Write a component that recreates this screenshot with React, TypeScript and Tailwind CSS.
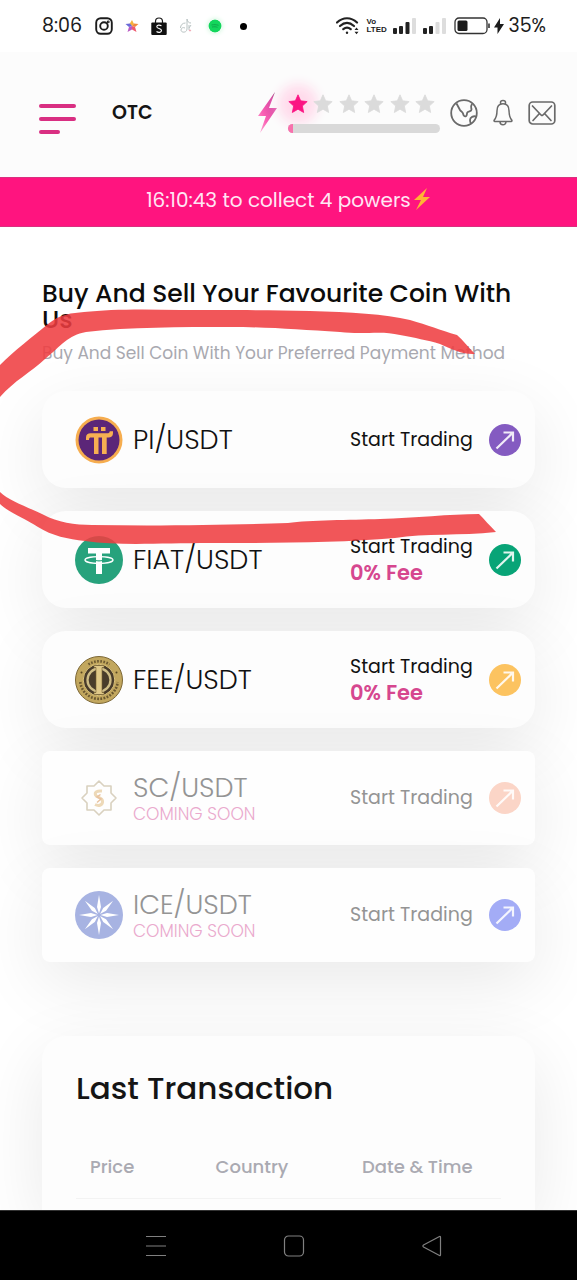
import type { ReactNode } from "react";

function StarShape({ className }: { className: string }) {
  return (
    <svg viewBox="0 0 24 24" className={className} fill="currentColor" stroke="currentColor" strokeWidth="1" strokeLinejoin="round" aria-hidden="true">
      <path d="M12 1l3.200 7.200 7.800.9-5.800 5.300 1.600 7.800L12 18.200l-6.800 4 1.600-7.800L1 9.100l7.800-.9z" />
    </svg>
  );
}

function Signal({ level }: { level: number }) {
  return (
    <svg viewBox="0 0 23 18" className="h-[18px] w-[23px]" aria-hidden="true">
      <rect x="0" y="11" width="4" height="6" rx="1" fill={level > 0 ? "#222" : "#ddd"} />
      <rect x="6" y="9" width="4" height="8" rx="1" fill={level > 1 ? "#222" : "#ddd"} />
      <rect x="12.500" y="5" width="4" height="12" rx="1" fill={level > 2 ? "#222" : "#ddd"} />
      <rect x="19" y="1" width="4" height="16" rx="1" fill="#ddd" />
    </svg>
  );
}

function StatusBar() {
  return (
    <div className="flex h-[52px] items-center justify-between bg-white pr-[31px] pl-[42px] text-[#1c1c1c]">
      <div className="flex items-center">
        <span className="w-[53px] text-[19px]">8:06</span>
        <svg viewBox="0 0 18 18" className="h-[18px] w-[18px]" fill="none" stroke="#1c1c1c" strokeWidth="1.900" aria-hidden="true">
          <rect x="1.200" y="1.200" width="15.600" height="15.600" rx="4.500" />
          <circle cx="9" cy="9" r="3.800" />
          <circle cx="13.200" cy="4.900" r=".5" />
        </svg>
        <svg viewBox="0 0 14 14" className="ml-3 h-[14px] w-[14px]" aria-hidden="true">
          <path d="M7 1L9 5 7 7 4.500 5z" fill="#f6b33c" />
          <path d="M9 4.500L13.500 5 10 8 7 7z" fill="#f08a3c" />
          <path d="M10 8L11.500 13 7 10.500V7z" fill="#ee5a6f" />
          <path d="M7 7v3.500L2.500 13 4 8z" fill="#b95bc4" />
          <path d="M7 7L4 8 .5 5l4.500-.5z" fill="#6a6ad8" />
        </svg>
        <svg viewBox="0 0 16 19" className="ml-3 h-[19px] w-[16px]" aria-hidden="true">
          <path d="M4.500 6V4.500a3.500 3.500 0 017 0V6" fill="none" stroke="#1c1c1c" strokeWidth="1.200" />
          <rect x=".3" y="5.500" width="15.400" height="12.500" rx="1" fill="#111" />
          <path d="M10.500 8.900C8.500 7.500 5.800 8 5.800 9.700c0 2.200 4.700 1.500 4.700 3.900 0 2-3.100 2.400-5 .9" fill="none" stroke="#fff" strokeWidth="1.100" />
        </svg>
        <svg viewBox="0 0 14 16" className="ml-3 h-4 w-[14px]" fill="none" stroke="#b9c3c3" strokeWidth="1" aria-hidden="true">
          <path d="M8 1v10c0 4-6 4-6 1 0-2 2-3 4-2" />
          <path d="M6.500 5c-3 0-5 2-5 5M8 1c.5 3 2 4 4 4M10 7v5M12 7l-2 3" />
          <circle cx="11" cy="12.500" r=".6" stroke="#ee9aa8" />
        </svg>
        <svg viewBox="0 0 14 14" className="ml-[15px] h-[14px] w-[14px] rounded-full shadow-[0_0_5px_#c6f3d5]" aria-hidden="true">
          <circle cx="7" cy="7" r="6.500" fill="#13d65c" />
          <path d="M3.500 6c2.500-.6 4.500-.4 7 .3M4 8c2-.4 4-.3 5.500.3" fill="none" stroke="#0fa84a" strokeWidth="1" />
        </svg>
        <span className="ml-[18px] h-[7px] w-[7px] rounded-full bg-black" />
      </div>
      <div className="flex items-center">
        <svg viewBox="0 0 24 18" className="h-[18px] w-6" fill="none" stroke="#222" strokeWidth="2.200" strokeLinecap="round" aria-hidden="true">
          <path d="M1 5.500C7-.2 15-.2 21 5.500M4 9c4.500-4 9.500-4 14 0M7.300 12.200c2.400-2 5-2 7.400 0" />
          <circle cx="11" cy="15.800" r="1.200" fill="#222" stroke="none" />
          <path d="M18.500 13l2-2.500 2 2.500zM18.500 14.800l2 2.500 2-2.500z" fill="#222" stroke="none" />
        </svg>
        <span className="ml-[6px] flex w-[19px] flex-col font-['Liberation_Sans',sans-serif] text-[8px] leading-[8px] font-bold">
          <span>Vo</span>
          <span>LTED</span>
        </span>
        <span className="ml-2"><Signal level={3} /></span>
        <span className="ml-[7px]"><Signal level={2} /></span>
        <svg viewBox="0 0 36 18" className="ml-2 h-[18px] w-9" fill="none" stroke="#333" strokeWidth="1.300" aria-hidden="true">
          <rect x="1" y="1" width="32" height="15.500" rx="4" />
          <rect x="3.500" y="3.500" width="10" height="10.500" rx="1.500" fill="#1c1c1c" stroke="none" />
          <path d="M35 6.500v4.500" strokeWidth="1.600" />
        </svg>
        <svg viewBox="0 0 10 16" className="ml-1 h-4 w-[10px]" fill="#1c1c1c" aria-hidden="true">
          <path d="M6 0v6h4L3.500 16V9.500H0z" />
        </svg>
        <span className="ml-1 text-[19px]">35%</span>
      </div>
    </div>
  );
}

function Header() {
  return (
    <header className="flex h-[125px] items-start justify-between bg-[#fcfcfc] pt-10 pr-[21px] pl-[39px]">
      <div className="flex items-start">
        <button type="button" aria-label="Open menu" className="mt-3 flex w-[37px] flex-col gap-[9px]">
          <span className="h-1 w-full rounded-full bg-[#d92f82]" />
          <span className="h-1 w-full rounded-full bg-[#d92f82]" />
          <span className="h-1 w-[21px] rounded-full bg-[#d92f82]" />
        </button>
        <h1 className="mt-[9px] ml-9 text-[19px] leading-6 font-semibold text-[#151515]">OTC</h1>
      </div>
      <div className="flex items-start">
        <svg viewBox="0 0 21 42" className="h-[42px] w-[21px]" aria-hidden="true">
          <defs>
            <linearGradient id="bolt" x1="1" y1="0" x2="0" y2="1">
              <stop offset="0" stopColor="#6d2354" />
              <stop offset=".22" stopColor="#d743a0" />
              <stop offset=".65" stopColor="#fb62b5" />
              <stop offset="1" stopColor="#fdb5dc" />
            </linearGradient>
          </defs>
          <path d="M18 0L1 24h8L3 41 20 16h-8z" fill="url(#bolt)" />
        </svg>
        <div className="ml-[10px] flex w-[152px] flex-col pt-[2px]">
          <div className="flex justify-between pr-[5px]">
            <span className="rounded-full bg-[#ffdcec] shadow-[0_0_12px_10px_#ffdcec]">
              <StarShape className="h-5 w-5 text-[#fb1583]" />
            </span>
            {[2, 3, 4, 5, 6].map((n) => (
              <StarShape key={n} className="relative h-5 w-5 text-[#dbdbdb]" />
            ))}
          </div>
          <div className="relative mt-[10px] h-[9px] overflow-hidden rounded-full bg-[#d9d9d9]">
            <div className="h-full w-[5px] bg-[#f871ad]" />
          </div>
        </div>
        <div className="mt-[7px] ml-[10px] flex items-center gap-[14px] text-[#6a6a6a]">
          <button type="button" aria-label="Language">
            <svg viewBox="0 0 28 28" className="h-7 w-7" fill="none" stroke="currentColor" strokeWidth="1.800" strokeLinejoin="round" aria-hidden="true">
              <circle cx="14" cy="14" r="12.800" />
              <path d="M6.500 4.500l3.500 6.500c1 1.700 2.500 1.500 3 3.500.5 2.200 1.500 3.300 3 2.600 1.500-.8.300-3 1.800-4.100 1.300-1 3.700-.6 3.700-2.600 0-1.700-1.500-2 .5-5.400M26.200 17.500c-2.700-.8-6.200.5-6.200 3.500 0 1.500.3 2.600 1 3.700" />
            </svg>
          </button>
          <button type="button" aria-label="Notifications">
            <svg viewBox="0 0 22 28" className="h-7 w-[22px]" fill="none" stroke="currentColor" strokeWidth="1.500" strokeLinejoin="round" aria-hidden="true">
              <path d="M8.500 5V3.500a2.500 2 0 015 0V5M11 4.800c-4 0-6 3-6 7 0 5-.7 6.800-2.700 9.200-.5.800-.3 1.500.6 1.500h16.200c.9 0 1.100-.7.600-1.500-2-2.400-2.700-4.200-2.700-9.200 0-4-2-7-6-7zM8 22.800a3 3 0 006 0" />
            </svg>
          </button>
          <button type="button" aria-label="Messages">
            <svg viewBox="0 0 28 24" className="h-6 w-7" fill="none" stroke="currentColor" strokeWidth="1.700" strokeLinecap="round" strokeLinejoin="round" aria-hidden="true">
              <rect x="1.200" y="1" width="25.600" height="22" rx="3.500" />
              <path d="M4.500 5l8.500 9q1 1 2 0l8.500-9M5 19.500l6-6.500M23 19.500L17 13" />
            </svg>
          </button>
        </div>
      </div>
    </header>
  );
}

function Banner() {
  return (
    <div className="flex h-[50px] items-start justify-center gap-[2px] border-y border-[#d9307f] bg-[#ff147f] pt-[9px] text-[20px] leading-[26px] text-[#ffe6f4]">
      <span>16:10:43 to collect 4 powers</span>
      <svg viewBox="0 0 18 24" className="h-6 w-[18px]" fill="#ffb534" aria-hidden="true">
        <path d="M14 1L1 13h7L3 23l14-13h-7z" />
      </svg>
    </div>
  );
}

function PiLogo() {
  return (
    <svg viewBox="0 0 48 48" className="h-12 w-12" aria-hidden="true">
      <circle cx="24" cy="24" r="23.500" fill="#f6ad4f" />
      <circle cx="24" cy="24" r="20.500" fill="#5b2678" />
      <g fill="#f7b052">
        <rect x="18.500" y="11" width="4.500" height="4" />
        <rect x="26" y="11" width="4.500" height="4" />
        <path d="M11 24v-2.500c0-3 2-4.300 4.500-4.300H32c2 0 2.600-.4 2.700-2h3.300v2c0 3-2 4.300-4.500 4.300h-1.800V38H27V21.500h-3.500V38H19V21.500h-3c-1.400 0-2 .6-2 2.500z" />
      </g>
    </svg>
  );
}

function TetherLogo() {
  return (
    <svg viewBox="0 0 48 48" className="h-12 w-12" aria-hidden="true">
      <circle cx="24" cy="24" r="24" fill="#27a27c" />
      <path d="M13 12h22v5.500h-8V38h-6V17.500h-8z" fill="#fff" />
      <ellipse cx="24" cy="24" rx="14" ry="3.300" fill="none" stroke="#fff" strokeWidth="1.300" />
      <path d="M20.500 24.500c2 .4 5 .4 7 0" fill="none" stroke="#27a27c" strokeWidth="1.200" />
    </svg>
  );
}

function FeeLogo() {
  return (
    <svg viewBox="0 0 48 48" className="h-12 w-12" aria-hidden="true">
      <circle cx="24" cy="24" r="23.500" fill="#c2a75e" stroke="#7c6735" strokeWidth="1" />
      <path d="M13.500 8.500a18.800 18.800 0 0121 0" fill="none" stroke="#6b5830" strokeWidth="2.600" strokeDasharray="1.600 1.500" />
      <path d="M5.300 26a18.800 18.800 0 0037.400 0" fill="none" stroke="#6b5830" strokeWidth="2.600" strokeDasharray="1.800 1.400" />
      <circle cx="6.500" cy="16.500" r="1" fill="#54431f" />
      <circle cx="41.500" cy="16.500" r="1" fill="#54431f" />
      <circle cx="24" cy="24" r="15.800" fill="#493c2b" stroke="#dcc37b" strokeWidth="1" />
      <circle cx="24" cy="24" r="11.500" fill="none" stroke="#cfbd86" strokeWidth="2.300" />
      <path d="M19 9.500h10v2h-2v25h2v2H19v-2h2v-25h-2z" fill="#dfc888" stroke="#75602f" strokeWidth=".6" />
    </svg>
  );
}

function ScLogo() {
  return (
    <svg viewBox="0 0 48 48" className="h-12 w-12" fill="none" aria-hidden="true">
      <path d="M24 7l5 5h7v7l5 5-5 5v7h-7l-5 5-5-5h-7v-7l-5-5 5-5v-7h7z" stroke="#d9d1bf" strokeWidth="1.600" strokeLinejoin="round" />
      <path d="M27 17c-5-.5-7.500 1-6.500 4s6.500 2 7 6-3.500 5.500-7.500 3.500" stroke="#edd9b8" strokeWidth="3" />
      <path d="M25.500 20.500l-3.500 2.500 4 2-4 3.500" stroke="#e9c3a0" strokeWidth="1.500" />
    </svg>
  );
}

function IceLogo() {
  return (
    <svg viewBox="0 0 48 48" className="h-12 w-12" aria-hidden="true">
      <circle cx="24" cy="24" r="24" fill="#a7b3e2" />
      {[0, 45, 90, 135, 180, 225, 270, 315].map((angle) => (
        <path key={angle} d="M24 4l2 12-2 6.500L22 16z" fill="#fff" transform={`rotate(${angle} 24 24)`} />
      ))}
    </svg>
  );
}

type Pair = {
  name: string;
  logo: ReactNode;
  arrow: string;
  free?: boolean;
  soon?: boolean;
};

const pairs: Pair[] = [
  { name: "PI/USDT", logo: <PiLogo />, arrow: "bg-[#845bc1]" },
  { name: "FIAT/USDT", logo: <TetherLogo />, arrow: "bg-[#08a477]", free: true },
  { name: "FEE/USDT", logo: <FeeLogo />, arrow: "bg-[#fcc360]", free: true },
  { name: "SC/USDT", logo: <ScLogo />, arrow: "bg-[#fbd5c7]", soon: true },
  { name: "ICE/USDT", logo: <IceLogo />, arrow: "bg-[#a3acf6]", soon: true },
];

function PairCard({ pair }: { pair: Pair }) {
  return (
    <li>
      <a
        href="#trade"
        aria-disabled={pair.soon}
        className={`flex items-center pr-[14px] pl-[33px] shadow-[0_20px_70px_rgba(0,0,0,0.09)] ${
          pair.soon ? "h-[94px] rounded-lg bg-[#fefefe] text-[#949494]" : "h-[97px] rounded-[24px] bg-[#fdfdfd] text-[#111111]"
        }`}
      >
        {pair.logo}
        <span className="ml-[10px] flex flex-1 flex-col">
          <span className="text-[27px] leading-8 font-light">{pair.name}</span>
          {pair.soon && <span className="text-[17px] leading-5 font-light text-[#eaa9cd]">COMING SOON</span>}
        </span>
        <span className="flex w-[139px] flex-col text-[19px] leading-[26px]">
          <span>Start Trading</span>
          {pair.free && <span className="text-[21px] font-semibold text-[#d6478f]">0% Fee</span>}
        </span>
        <span className={`flex h-8 w-8 items-center justify-center rounded-full ${pair.arrow}`}>
          <svg viewBox="0 0 32 32" className="h-8 w-8" fill="none" stroke="#fff" strokeOpacity=".88" strokeWidth="2.200" aria-hidden="true">
            <path d="M7.500 24.500L24 8.500M14.500 8.500H24V17.500" />
          </svg>
        </span>
      </a>
    </li>
  );
}

function Marker() {
  return (
    <svg viewBox="0 0 577 250" className="pointer-events-none absolute top-[74px] left-0 w-full" fill="#ef3d40" fillOpacity=".87" aria-hidden="true">
      <path d="M0 64C14 50 32 36 48 23C60 13 72 12 84 11C110 8 145 8 180 9C230 9 270 9 310 10C350 11 385 13 410 19C428 24 440 29 457 34C463 39 469 47 475 53C464 54 451 48 440 43C427 39 415 37 400 34C380 29 366 34 340 31C300 29 270 26 230 26C180 26 130 26 86 31C68 34 61 45 45 58C31 71 14 80 0 96z" />
      <path d="M0 191C9 200 30 207 44 214C57 221 75 224 92 224C160 225 230 224 288 222C310 219 350 219 380 218C415 217 450 213 479 213C484 218 490 225 496 231C460 235 425 232 395 237C340 242 270 242 210 242C160 242 120 245 85 240C68 238 52 235 38 226C24 217 8 211 0 203z" />
    </svg>
  );
}

function Transactions() {
  return (
    <section className="mt-[74px] flex-1 rounded-t-3xl bg-[#fdfdfd] px-[34px] pt-8 shadow-[0_20px_70px_rgba(0,0,0,0.09)]">
      <h2 className="text-[31px] leading-10 font-medium text-[#151515]">Last Transaction</h2>
      <table className="mt-7 w-full border-b border-[#f3f3f3] text-[18px] leading-6 text-[#aaaab2]">
        <thead>
          <tr>
            <th scope="col" className="w-[30%] py-[19px] pl-[14px] text-left font-medium">Price</th>
            <th scope="col" className="w-[34%] py-[19px] pl-[12px] text-left font-medium">Country</th>
            <th scope="col" className="py-[19px] pl-[14px] text-left font-medium">Date &amp; Time</th>
          </tr>
        </thead>
      </table>
    </section>
  );
}

function NavBar() {
  return (
    <nav className="flex h-[70px] items-center justify-center gap-[116px] border-t border-[#333] bg-black pl-[11px] text-[#808080]">
      <button type="button" aria-label="Recent apps">
        <svg viewBox="0 0 22 22" className="h-[22px] w-[22px]" fill="none" stroke="currentColor" strokeWidth="1.200" aria-hidden="true">
          <path d="M1 1.500h20M1 11h20M1 20.500h20" />
        </svg>
      </button>
      <button type="button" aria-label="Home">
        <svg viewBox="0 0 22 22" className="h-[22px] w-[22px]" fill="none" stroke="currentColor" strokeWidth="1.200" aria-hidden="true">
          <rect x="1.500" y="1" width="19" height="20" rx="4" />
        </svg>
      </button>
      <button type="button" aria-label="Back">
        <svg viewBox="0 0 22 22" className="h-[22px] w-[22px]" fill="none" stroke="currentColor" strokeWidth="1.200" strokeLinejoin="round" aria-hidden="true">
          <path d="M18.500 1.500q1-.5 1 .8v17.400q0 1.300-1 .8L2.500 12q-1.200-1 0-2z" />
        </svg>
      </button>
    </nav>
  );
}

export default function App() {
  return (
    <div className="flex min-h-screen flex-col overflow-x-hidden bg-white font-['Poppins','Inter',sans-serif]">
      <StatusBar />
      <Header />
      <Banner />
      <main className="relative flex flex-1 flex-col overflow-hidden px-[42px] pt-[54px]">
        <h2 className="text-[25px] leading-[26px] font-medium text-[#0c0c0c]">Buy And Sell Your Favourite Coin With Us</h2>
        <p className="mt-2 text-[17px] leading-6 whitespace-nowrap text-[#a9a9b0]">Buy And Sell Coin With Your Preferred Payment Method</p>
        <ul className="mt-[26px] flex flex-col gap-[23px]">
          {pairs.map((pair) => (
            <PairCard key={pair.name} pair={pair} />
          ))}
        </ul>
        <Transactions />
        <Marker />
      </main>
      <NavBar />
    </div>
  );
}
